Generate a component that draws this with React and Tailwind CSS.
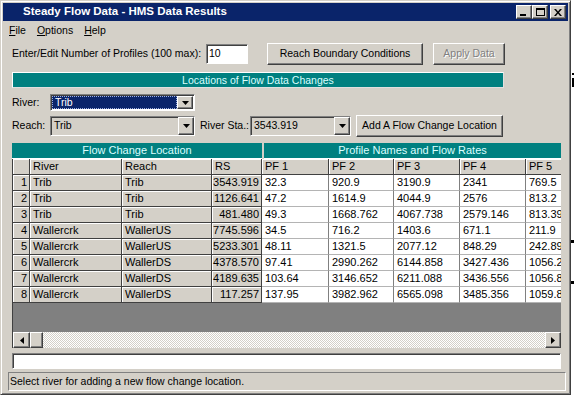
import React from "react";

const raised =
  "border border-t-white border-l-white border-r-[#404040] border-b-[#404040] shadow-[inset_-1px_-1px_0_#808080] bg-[#d4d0c8]";
const sunken =
  "border border-t-[#808080] border-l-[#808080] border-r-white border-b-white shadow-[inset_1px_1px_0_#404040]";

const rows = [
  ["1", "Trib", "Trib", "3543.919", "32.3", "920.9", "3190.9", "2341", "769.5"],
  ["2", "Trib", "Trib", "1126.641", "47.2", "1614.9", "4044.9", "2576", "813.2"],
  ["3", "Trib", "Trib", "481.480", "49.3", "1668.762", "4067.738", "2579.146", "813.39"],
  ["4", "Wallercrk", "WallerUS", "7745.596", "34.5", "716.2", "1403.6", "671.1", "211.9"],
  ["5", "Wallercrk", "WallerUS", "5233.301", "48.11", "1321.5", "2077.12", "848.29", "242.89"],
  ["6", "Wallercrk", "WallerDS", "4378.570", "97.41", "2990.262", "6144.858", "3427.436", "1056.25"],
  ["7", "Wallercrk", "WallerDS", "4189.635", "103.64", "3146.652", "6211.088", "3436.556", "1056.88"],
  ["8", "Wallercrk", "WallerDS", "117.257", "137.95", "3982.962", "6565.098", "3485.356", "1059.88"],
];

function DownArrow() {
  return (
    <svg width="7" height="4" viewBox="0 0 7 4">
      <polygon points="0,0 7,0 3.5,4" fill="#000" />
    </svg>
  );
}

function DropBtn() {
  return (
    <div className={`${raised} w-[16px] h-full flex items-center justify-center shrink-0`}>
      <DownArrow />
    </div>
  );
}

function GreyCell({ w, children, right }) {
  return (
    <div
      className={`${w} shrink-0 h-full bg-[#d4d0c8] border-r border-b border-r-[#404040] border-b-[#404040] shadow-[inset_1px_1px_0_#ffffff] overflow-hidden whitespace-nowrap leading-[15px] ${
        right ? "text-right pr-[2px]" : "pl-[3px]"
      }`}
    >
      {children}
    </div>
  );
}

function WhiteCell({ w, children }) {
  return (
    <div
      className={`${w} shrink-0 h-full bg-white border-r border-b border-r-[#808080] border-b-[#b4b4b4] overflow-hidden whitespace-nowrap leading-[15px] pl-[3px]`}
    >
      {children}
    </div>
  );
}

export default function App() {
  return (
    <div className="w-[576px] h-[395px] flex bg-white font-['Liberation_Sans',Arial,sans-serif] text-[10.5px] text-black overflow-hidden">
      <div className="w-[571px] h-[395px] shrink-0 bg-[#d4d0c8] border border-t-[#d4d0c8] border-l-[#d4d0c8] border-r-[#404040] border-b-[#404040] shadow-[inset_1px_1px_0_#ffffff,inset_-1px_-1px_0_#808080] p-[2px] flex flex-col">
        {/* Title bar */}
        <div className="h-[18px] bg-[#0a246a] flex items-center shrink-0">
          <div className="ml-[20px] text-white font-bold text-[11.5px] leading-none whitespace-nowrap">
            Steady Flow Data - HMS Data Results
          </div>
          <div className="ml-auto mr-[2px] flex items-center">
            <div className={`${raised} w-[16px] h-[14px] flex items-end pl-[3px] pb-[2px]`}>
              <div className="w-[6px] h-[2px] bg-black" />
            </div>
            <div className={`${raised} w-[16px] h-[14px] flex items-center justify-center`}>
              <div className="w-[9px] h-[8px] border border-black border-t-2" />
            </div>
            <div className={`${raised} ml-[2px] w-[16px] h-[14px] flex items-center justify-center`}>
              <svg width="8" height="7" viewBox="0 0 8 7">
                <path d="M0 0 L2 0 L4 2.5 L6 0 L8 0 L5 3.5 L8 7 L6 7 L4 4.5 L2 7 L0 7 L3 3.5 Z" fill="#000" />
              </svg>
            </div>
          </div>
        </div>

        {/* Menu */}
        <div className="h-[19px] flex items-center pl-[6px] gap-[11px] shrink-0 leading-none">
          <span>
            <span className="underline">F</span>ile
          </span>
          <span>
            <span className="underline">O</span>ptions
          </span>
          <span>
            <span className="underline">H</span>elp
          </span>
        </div>

        {/* Profiles row */}
        <div className="mt-[3px] h-[22px] flex items-center shrink-0">
          <div className="ml-[9px] w-[194px] whitespace-nowrap">Enter/Edit Number of Profiles (100 max):</div>
          <div className={`${sunken} bg-white w-[42px] h-[20px] pl-[2px] leading-[17px]`}>10</div>
          <div className={`${raised} ml-[19px] w-[156px] h-[22px] flex items-center justify-center whitespace-nowrap`}>
            Reach Boundary Conditions
          </div>
          <div
            className={`${raised} ml-[10px] w-[72px] h-[22px] flex items-center justify-center text-[#808080] [text-shadow:1px_1px_0_#ffffff]`}
          >
            Apply Data
          </div>
        </div>

        {/* Teal bar */}
        <div className="mt-[7px] ml-[9px] w-[492px] h-[16px] bg-[#008080] border border-t-white border-l-white border-r-[#e0e0e0] border-b-[#e0e0e0] text-[#dcffff] flex items-center justify-center leading-none shrink-0">
          Locations of Flow Data Changes
        </div>

        {/* River row */}
        <div className="mt-[6px] h-[17px] flex items-center shrink-0">
          <div className="ml-[9px] w-[38px]">River:</div>
          <div className={`${sunken} bg-white w-[145px] h-[17px] flex p-[1px]`}>
            <div className="flex-1 bg-[#0a246a] text-white border border-dotted border-[#9fb0e0] leading-[11px] pl-[2px]">
              Trib
            </div>
            <DropBtn />
          </div>
        </div>

        {/* Reach row */}
        <div className="mt-[3px] h-[23px] flex items-center shrink-0">
          <div className="ml-[9px] w-[38px]">Reach:</div>
          <div className={`${sunken} bg-[#d4d0c8] w-[145px] h-[20px] flex`}>
            <div className="flex-1 pl-[3px] leading-[17px]">Trib</div>
            <DropBtn />
          </div>
          <div className="ml-[5px] w-[50px] whitespace-nowrap">River Sta.:</div>
          <div className={`${sunken} bg-[#d4d0c8] w-[101px] h-[20px] flex`}>
            <div className="flex-1 pl-[3px] leading-[17px]">3543.919</div>
            <DropBtn />
          </div>
          <div className={`${raised} ml-[5px] w-[147px] h-[22px] flex items-center justify-center whitespace-nowrap`}>
            Add A Flow Change Location
          </div>
        </div>

        {/* Grid */}
        <div className="mt-[6px] ml-[9px] w-[549px] flex flex-col shrink-0 overflow-hidden text-[11px]">
          <div className="h-[16px] flex bg-[#d4d0c8]">
            <div className="w-[250px] shrink-0 bg-[#008080] text-[#dcffff] flex items-center justify-center border-b border-b-white leading-none">
              Flow Change Location
            </div>
            <div className="w-[2px] shrink-0 bg-[#d4d0c8]" />
            <div className="flex-1 bg-[#008080] text-[#dcffff] flex items-center justify-center border-b border-b-white leading-none whitespace-nowrap">
              Profile Names and Flow Rates
            </div>
          </div>
          <div className="h-[16px] flex border-l border-l-[#404040]">
            <GreyCell w="w-[17px]" />
            <GreyCell w="w-[92px]">River</GreyCell>
            <GreyCell w="w-[90px]">Reach</GreyCell>
            <GreyCell w="w-[50px]">RS</GreyCell>
            <GreyCell w="w-[67px]">PF 1</GreyCell>
            <GreyCell w="w-[65px]">PF 2</GreyCell>
            <GreyCell w="w-[66px]">PF 3</GreyCell>
            <GreyCell w="w-[66px]">PF 4</GreyCell>
            <GreyCell w="w-[66px]">PF 5</GreyCell>
          </div>
          {rows.map((r) => (
            <div key={r[0]} className="h-[16px] flex border-l border-l-[#404040]">
              <GreyCell w="w-[17px]" right>
                {r[0]}
              </GreyCell>
              <GreyCell w="w-[92px]">{r[1]}</GreyCell>
              <GreyCell w="w-[90px]">{r[2]}</GreyCell>
              <GreyCell w="w-[50px]" right>
                {r[3]}
              </GreyCell>
              <WhiteCell w="w-[67px]">{r[4]}</WhiteCell>
              <WhiteCell w="w-[65px]">{r[5]}</WhiteCell>
              <WhiteCell w="w-[66px]">{r[6]}</WhiteCell>
              <WhiteCell w="w-[66px]">{r[7]}</WhiteCell>
              <WhiteCell w="w-[66px]">{r[8]}</WhiteCell>
            </div>
          ))}
          <div className="h-[29px] bg-[#808080] border-l border-l-[#404040]" />
          <div className="h-[16px] flex border-l border-l-[#404040]">
            <div className={`${raised} w-[17px] h-full flex items-center justify-center shrink-0`}>
              <svg width="4" height="7" viewBox="0 0 4 7">
                <polygon points="4,0 4,7 0,3.5" fill="#000" />
              </svg>
            </div>
            <div className={`${raised} w-[13px] h-full shrink-0`} />
            <div className="flex-1 h-full bg-[repeating-conic-gradient(#d4d0c8_0%_25%,#ffffff_0%_50%)] bg-size-[2px_2px]" />
            <div className={`${raised} w-[16px] h-full flex items-center justify-center shrink-0`}>
              <svg width="4" height="7" viewBox="0 0 4 7">
                <polygon points="0,0 4,3.5 0,7" fill="#000" />
              </svg>
            </div>
          </div>
        </div>

        {/* Text box */}
        <div className={`${sunken} mt-[5px] ml-[9px] w-[549px] h-[16px] bg-white shrink-0`} />

        {/* Status bar */}
        <div className="mt-[3px] ml-[5px] w-[558px] h-[19px] border border-t-[#808080] border-l-[#808080] border-r-white border-b-white flex items-center pl-[1px] whitespace-nowrap shrink-0">
          Select river for adding a new flow change location.
        </div>
      </div>

      {/* Desktop strip */}
      <div className="w-[5px] h-[395px] bg-white flex flex-col shrink-0">
        <div className="h-[73px] shrink-0" />
        <div className="h-[2px] w-[2px] ml-[1px] bg-black shrink-0" />
        <div className="h-[3px] shrink-0" />
        <div className="h-[9px] w-[2px] ml-[1px] bg-black shrink-0" />
        <div className="h-[153px] shrink-0" />
        <div className="h-[3px] w-[3px] bg-black shrink-0" />
        <div className="h-[38px] shrink-0" />
        <div className="h-[3px] w-[3px] bg-black shrink-0" />
      </div>
    </div>
  );
}
